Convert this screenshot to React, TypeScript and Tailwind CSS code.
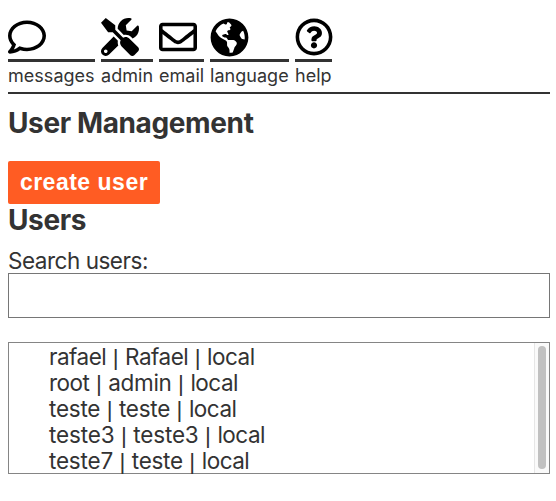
import { Fragment, type ReactNode } from 'react';
import { FaRegComment, FaTools, FaRegEnvelope, FaGlobeAmericas, FaRegQuestionCircle } from 'react-icons/fa';

type Item = { label: string; width: string; icon: ReactNode };

const items: Item[] = [
  { label: 'messages', width: 'w-[87px]', icon: <FaRegComment size={38} /> },
  { label: 'admin', width: 'w-[52px]', icon: <FaTools size={38} /> },
  { label: 'email', width: 'w-[45px]', icon: <FaRegEnvelope size={38} /> },
  { label: 'language', width: 'w-[79px]', icon: <FaGlobeAmericas size={39} className="-ml-[0.5px] -mt-[0.5px]" /> },
  { label: 'help', width: 'w-[37px]', icon: <FaRegQuestionCircle size={38} className="-ml-[0.5px] shrink-0" /> },
];

type Word = { text: string; tracking: string };

const local: Word = { text: 'local', tracking: 'tracking-[-0.5px]' };
const teste: Word = { text: 'teste', tracking: 'tracking-[-0.25px]' };
const teste3: Word = { text: 'teste3', tracking: 'tracking-[-0.15px]' };

const users: Word[][] = [
  [{ text: 'rafael', tracking: 'tracking-[-0.5px]' }, { text: 'Rafael', tracking: 'tracking-[-0.5px]' }, local],
  [{ text: 'root', tracking: 'tracking-[-0.5px]' }, { text: 'admin', tracking: 'tracking-[-0.3px]' }, local],
  [teste, teste, local],
  [teste3, teste3, local],
  [{ text: 'teste7', tracking: 'tracking-[-0.2px]' }, teste, local],
];

export default function App() {
  return (
    <div className="h-[501px] w-[556px] overflow-hidden bg-white pl-2 pr-[6px] pt-[18px] font-['Inter','Liberation_Sans',sans-serif] text-[#333]">
      <nav className="flex h-[76px] gap-[6px] border-b-2 border-[#333]">
        {items.map((item) => (
          <a key={item.label} className={`${item.width} block whitespace-nowrap`}>
            <span className="flex h-[44px] border-b-3 border-[#333] text-black">{item.icon}</span>
            <span className="block h-[27px] text-[18px] leading-[27px] tracking-[0.03px]">{item.label}</span>
          </a>
        ))}
      </nav>
      <h1 className="mt-[13px] h-8 text-[28px] font-bold leading-[33px] tracking-[-0.38px]">User Management</h1>
      <button className="mt-[22px] block h-[43px] w-[152px] rounded-[2px] bg-[#ff5c23] pb-px text-center font-['Liberation_Sans',sans-serif] text-[23px] font-bold leading-[42px] tracking-[0.5px] text-white">
        create user
      </button>
      <h2 className="h-8 text-[28px] font-bold leading-[33px] tracking-[-0.38px]">Users</h2>
      <label className="mt-[11px] block h-[26px] text-[22.5px] leading-[28px] tracking-[-0.48px]">Search users:</label>
      <input className="block h-[45px] w-full border border-[#767676] bg-white px-2 outline-none" />
      <div className="mt-6 flex h-[132px] border border-[#858585]">
        <ul className="flex-1 pl-10 pt-[1px] text-[22.5px] leading-[26px]">
          {users.map((words, row) => (
            <li key={row} className="h-[26px] whitespace-nowrap">
              {words.map((word, i) => (
                <Fragment key={i}>
                  {i > 0 && <> <span className="px-[0.15px] font-['Liberation_Sans',sans-serif]">|</span> </>}
                  <span className={word.tracking}>{word.text}</span>
                </Fragment>
              ))}
            </li>
          ))}
        </ul>
        <div className="w-[15px] border-l border-[#e6e6e6] bg-[#fafafa] pl-[3px] pt-[3px]">
          <div className="h-[123px] w-2 rounded-full bg-[#c1c1c1]" />
        </div>
      </div>
    </div>
  );
}
